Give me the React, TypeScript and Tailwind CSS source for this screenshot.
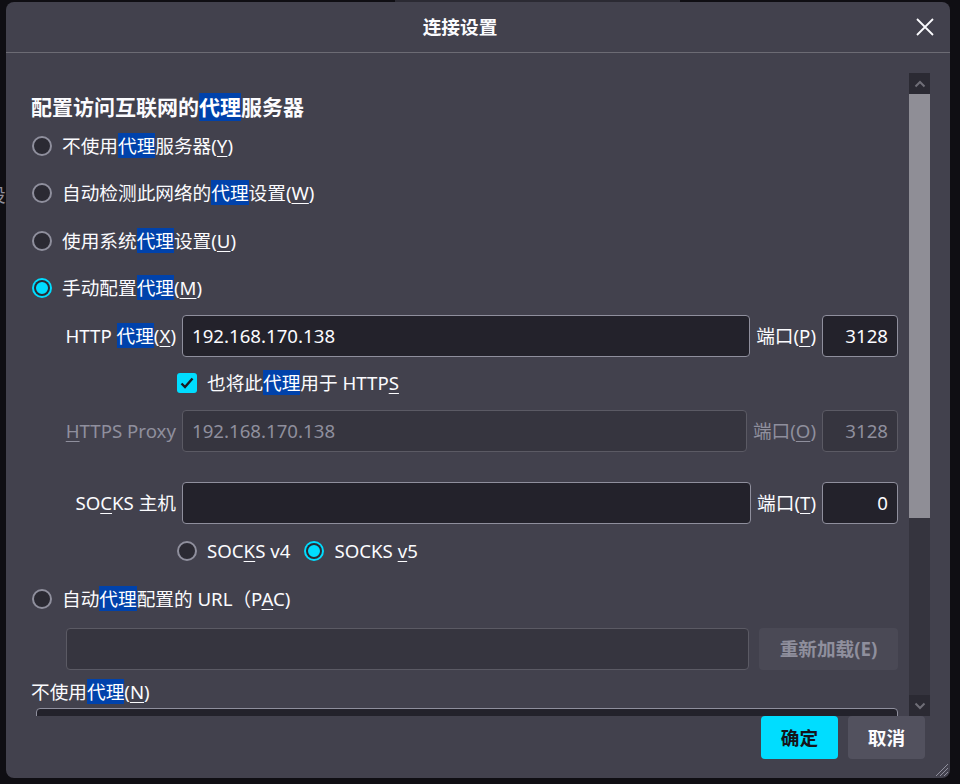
import type { ReactNode } from 'react';

const FONT = '"Noto Sans", "Noto Sans CJK SC", sans-serif';

function Hl({ children }: { children: ReactNode }) {
  return <span className="bg-[#0042ab] text-white">{children}</span>;
}

function U({ children }: { children: ReactNode }) {
  return <span className="underline decoration-1 underline-offset-[3px]">{children}</span>;
}

function Radio({ checked = false }: { checked?: boolean }) {
  if (checked) {
    return (
      <span className="w-5 h-5 shrink-0 rounded-full border-2 border-[#00ddff] bg-[#00ddff] flex items-center justify-center">
        <span className="w-4 h-4 rounded-full bg-[#00ddff] shadow-[inset_0_0_0_2px_#2b2a33]" />
      </span>
    );
  }
  return <span className="w-5 h-5 shrink-0 rounded-full border-2 border-[#8f8f9d] bg-[#2b2a33]" />;
}

function RadioRow({ checked, children }: { checked?: boolean; children: ReactNode }) {
  return (
    <div className="h-[47.5px] flex items-center gap-[10px] pl-[1px]">
      <Radio checked={checked} />
      <span>{children}</span>
    </div>
  );
}

function Field({ value = '', disabled = false, right = false, className = '' }: { value?: string; disabled?: boolean; right?: boolean; className?: string }) {
  return (
    <div
      className={`h-full rounded-[4px] border flex items-center px-[9px] ${
        disabled ? 'bg-[#36353f] border-[#5b5a64] text-[#8f8f9d]' : 'bg-[#23222b] border-[#8f8f9d] text-[#fbfbfe]'
      } ${right ? 'justify-end' : ''} ${className}`}
    >
      {value}
    </div>
  );
}

function ProxyRow({
  label,
  value,
  port,
  portLabel,
  disabled = false,
}: {
  label: ReactNode;
  value: string;
  port: string;
  portLabel: ReactNode;
  disabled?: boolean;
}) {
  return (
    <div className={`h-[42px] flex items-center ${disabled ? 'text-[#8f8f9d]' : ''}`}>
      <div className="w-[145px] text-right shrink-0">{label}</div>
      <Field value={value} disabled={disabled} className="flex-1 ml-[6px]" />
      <div className="shrink-0 px-[6px]">{portLabel}</div>
      <Field value={port} disabled={disabled} right className="w-[76px] shrink-0" />
    </div>
  );
}

function Chevron({ up }: { up?: boolean }) {
  return (
    <svg width="12" height="8" viewBox="0 0 12 8" fill="none">
      <path d={up ? 'M1.5 6.5 6 2l4.5 4.5' : 'M1.5 1.5 6 6l4.5-4.5'} stroke="#6f6e77" strokeWidth="2" />
    </svg>
  );
}

export default function App() {
  return (
    <div className="relative w-[960px] h-[784px] bg-[#0f0e13] overflow-hidden text-[#fbfbfe] text-[18.67px]" style={{ fontFamily: FONT }}>
      {/* page content behind the dialog */}
      <div className="absolute left-[395px] top-0 w-[285px] h-[3px] bg-[#2b2a33]" />
      <div className="absolute left-[-13px] top-[181px] text-[#8f8f9d]">设</div>

      <div className="absolute left-[6px] top-[2px] w-[944px] h-[776px] rounded-[8px] bg-[#42414d] flex flex-col">
        {/* header */}
        <div className="h-[51px] shrink-0 border-b border-[#6c6b74] flex items-center justify-center relative">
          <span className="font-bold mr-[36px] mt-[-1px]">连接设置</span>
          <svg className="absolute right-[16px] top-[16px]" width="18" height="18" viewBox="0 0 18 18">
            <path d="M1 1l16 16M17 1 1 17" stroke="#fbfbfe" strokeWidth="1.8" />
          </svg>
        </div>

        {/* scrolling body */}
        <div className="h-[663px] shrink-0 flex">
          <div className="flex-1 overflow-hidden pl-[25px] pr-[11px] pt-[40px] leading-[24px]">
            <div className="h-[29px] text-[21px] font-bold leading-[28px]">
              配置访问互联网的<Hl>代理</Hl>服务器
            </div>
            <RadioRow>
              不使用<Hl>代理</Hl>服务器(<U>Y</U>)
            </RadioRow>
            <RadioRow>
              自动检测此网络的<Hl>代理</Hl>设置(<U>W</U>)
            </RadioRow>
            <RadioRow>
              使用系统<Hl>代理</Hl>设置(<U>U</U>)
            </RadioRow>
            <RadioRow checked>
              手动配置<Hl>代理</Hl>(<U>M</U>)
            </RadioRow>

            <div className="mt-[3px]">
              <ProxyRow
                label={
                  <>
                    HTTP <Hl>代理</Hl>(<U>X</U>)
                  </>
                }
                value="192.168.170.138"
                portLabel={
                  <>
                    端口(<U>P</U>)
                  </>
                }
                port="3128"
              />
            </div>

            <div className="mt-[16px] h-[20px] flex items-center gap-[10px] pl-[146px]">
              <span className="w-5 h-5 rounded-[3px] bg-[#00ddff] flex items-center justify-center">
                <svg width="14" height="12" viewBox="0 0 14 12" fill="none">
                  <path d="M1.5 6.5 5 10l7.5-8.5" stroke="#1c1b22" strokeWidth="2.4" />
                </svg>
              </span>
              <span>
                也将此<Hl>代理</Hl>用于 HTTP<U>S</U>
              </span>
            </div>

            <div className="mt-[17px]">
              <ProxyRow
                disabled
                label={
                  <>
                    <U>H</U>TTPS Proxy
                  </>
                }
                value="192.168.170.138"
                portLabel={
                  <>
                    端口(<U>O</U>)
                  </>
                }
                port="3128"
              />
            </div>

            <div className="mt-[30px]">
              <ProxyRow
                label={
                  <>
                    SO<U>C</U>KS 主机
                  </>
                }
                value=""
                portLabel={
                  <>
                    端口(<U>T</U>)
                  </>
                }
                port="0"
              />
            </div>

            <div className="mt-[17px] h-[20px] flex items-center pl-[146px]">
              <Radio />
              <span className="ml-[10px]">
                SOC<U>K</U>S v4
              </span>
              <span className="ml-[14px]">
                <Radio checked />
              </span>
              <span className="ml-[10px]">
                SOCKS <U>v</U>5
              </span>
            </div>

            <div className="mt-[28px] h-[20px] flex items-center gap-[10px] pl-[1px]">
              <Radio />
              <span>
                自动<Hl>代理</Hl>配置的 URL（P<U>A</U>C)
              </span>
            </div>

            <div className="mt-[19px] h-[42px] flex items-center pl-[35px]">
              <Field disabled className="flex-1" />
              <div className="ml-[10px] w-[139px] h-full rounded-[4px] bg-[#4a4955] flex items-center justify-center font-bold text-[#8f8f9d]">
                重新加载(E)
              </div>
            </div>

            <div className="mt-[10px] h-[24px]">
              不使用<Hl>代理</Hl>(<U>N</U>)
            </div>
            <div className="mt-[4px] ml-[5px] h-[120px] rounded-[4px] border border-[#8f8f9d] bg-[#23222b]" />
          </div>

          {/* scrollbar */}
          <div className="w-[21px] shrink-0 mr-[20px] pt-[20px] flex flex-col">
            <div className="h-[21px] bg-[#2b2a33] flex items-center justify-center">
              <Chevron up />
            </div>
            <div className="h-[424px] bg-[#8f8e96]" />
            <div className="h-[177px] bg-[#35343e]" />
            <div className="h-[21px] bg-[#2b2a33] flex items-center justify-center">
              <Chevron />
            </div>
          </div>
        </div>

        {/* footer */}
        <div className="flex justify-end gap-[10px] pr-[25px] relative flex-1">
          <div className="w-[77px] h-[43px] rounded-[4px] bg-[#00ddff] text-[#15141a] font-bold flex items-center justify-center">
            确定
          </div>
          <div className="w-[77px] h-[43px] rounded-[4px] bg-[#52515e] text-[#fbfbfe] font-bold flex items-center justify-center">
            取消
          </div>
          <svg className="absolute right-[1px] bottom-[1px]" width="16" height="16" viewBox="0 0 16 16">
            <path d="M15 3 3 15M15 7 7 15M15 11l-4 4" stroke="#8f8f9d" strokeWidth="1" />
          </svg>
        </div>
      </div>
    </div>
  );
}
